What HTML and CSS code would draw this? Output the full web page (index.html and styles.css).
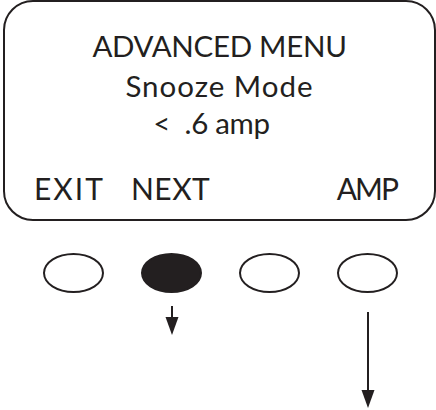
FILE: index.html
```html
<!DOCTYPE html>
<html>
<head>
<meta charset="utf-8">
<link rel="stylesheet" href="styles.css">
</head>
<body>
<div class="screen">
  <div class="lines">
    <div class="line line-title">ADVANCED MENU</div>
    <div class="line line-mode">Snooze Mode</div>
    <div class="line line-amp">&lt;&nbsp; .6 amp</div>
  </div>
  <div class="softkeys">
    <span class="key key-exit">EXIT</span>
    <span class="key key-next">NEXT</span>
    <span class="key key-amp">AMP</span>
  </div>
</div>
<div class="buttons">
  <div class="btn-col">
    <div class="oval"></div>
  </div>
  <div class="btn-col">
    <div class="oval filled"></div>
    <svg class="arrow-short" width="14" height="29" viewBox="0 0 14 29">
      <line x1="7" y1="0" x2="7" y2="14" stroke="#231f20" stroke-width="2"/>
      <polygon points="0.5,11 13.5,11 7,29" fill="#231f20"/>
    </svg>
  </div>
  <div class="btn-col">
    <div class="oval"></div>
  </div>
  <div class="btn-col">
    <div class="oval"></div>
    <svg class="arrow-long" width="14" height="96" viewBox="0 0 14 96">
      <line x1="7" y1="0" x2="7" y2="82" stroke="#231f20" stroke-width="2"/>
      <polygon points="0.5,78 13.5,78 7,96" fill="#231f20"/>
    </svg>
  </div>
</div>
</body>
</html>
```

FILE: styles.css
```css
html, body {
  margin: 0;
  padding: 0;
  background: #ffffff;
}
body {
  width: 436px;
  height: 410px;
  overflow: hidden;
  font-family: Lato, "Open Sans", "Liberation Sans", sans-serif;
  color: #231f20;
}
.screen {
  box-sizing: border-box;
  margin-left: 3px;
  width: 433px;
  height: 221px;
  border: 2.5px solid #231f20;
  border-radius: 30px;
  display: flex;
  flex-direction: column;
}
.lines {
  display: flex;
  flex-direction: column;
  align-items: center;
  padding-top: 24px;
}
.line {
  font-size: 29.5px;
  white-space: pre;
  letter-spacing: -0.3px;
}
.line-title {
  line-height: 40px;
}
.line-mode {
  line-height: 39px;
  letter-spacing: 1px;
}
.line-amp {
  line-height: 36px;
  padding-right: 16px;
}
.softkeys {
  display: flex;
  margin-top: 27px;
  font-size: 30px;
  line-height: 40px;
}
.key-exit {
  margin-left: 29px;
  letter-spacing: 2px;
}
.key-next {
  margin-left: 26px;
  letter-spacing: 0.5px;
}
.key-amp {
  margin-left: auto;
  margin-right: 37px;
  letter-spacing: -2px;
}
.buttons {
  display: flex;
  gap: 37px;
  margin-left: 43px;
  margin-top: 32px;
}
.btn-col {
  width: 61px;
  display: flex;
  flex-direction: column;
  align-items: center;
}
.oval {
  box-sizing: border-box;
  width: 61px;
  height: 40px;
  border: 2.5px solid #231f20;
  border-radius: 50%;
}
.oval.filled {
  background: #231f20;
}
.arrow-short {
  display: block;
  margin-top: 13px;
}
.arrow-long {
  display: block;
  margin-top: 19px;
}
```
